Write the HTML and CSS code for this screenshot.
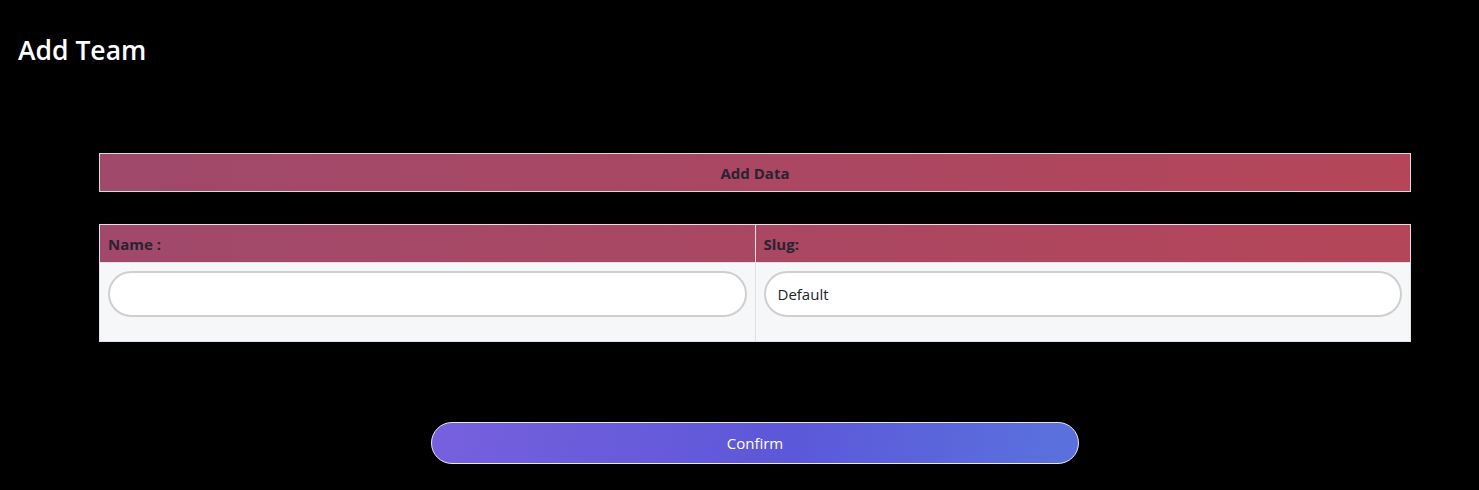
FILE: index.html
```html
<!DOCTYPE html>
<html>
<head>
<meta charset="utf-8">
<link rel="stylesheet" href="styles.css">
</head>
<body>
<div class="page">
  <h2 class="title">Add Team</h2>
  <div class="content">
    <div class="section-bar">Add Data</div>
    <table class="data-table">
      <thead>
        <tr>
          <th>Name :</th>
          <th>Slug:</th>
        </tr>
      </thead>
      <tbody>
        <tr>
          <td><input class="field" type="text" value=""></td>
          <td><input class="field" type="text" value="Default"></td>
        </tr>
      </tbody>
    </table>
    <div class="actions">
      <button class="confirm">Confirm</button>
    </div>
  </div>
</div>
</body>
</html>
```

FILE: styles.css
```css
html, body {
  margin: 0;
  padding: 0;
  background: #000;
}
body {
  font-family: "Open Sans", "Noto Sans", sans-serif;
  color: #fff;
}
.page {
  padding: 30px 18px 0 18px;
}
.title {
  margin: 0;
  font-size: 26.5px;
  font-weight: 600;
  line-height: 40px;
  color: #fff;
}
.content {
  padding: 83px 50px 0 81px;
}
.section-bar {
  height: 37px;
  border: 1px solid #d9d9d9;
  background: linear-gradient(100deg, #a0496b 0%, #ab4762 55%, #b54659 100%);
  color: #2a2230;
  font-weight: 700;
  font-size: 15px;
  display: flex;
  align-items: center;
  justify-content: center;
}
.data-table {
  margin-top: 32px;
  width: 100%;
  border-collapse: collapse;
  border: 1px solid #dee2e6;
}
.data-table thead tr {
  background: linear-gradient(100deg, #a0496b 0%, #ab4762 55%, #b54659 100%);
}
.data-table th {
  height: 38px;
  padding: 0 8px;
  text-align: left;
  font-size: 15px;
  font-weight: 700;
  color: #2a2230;
  border-left: 1px solid #dee2e6;
  box-sizing: border-box;
}
.data-table th:first-child { border-left: none; }
.data-table tbody td {
  background: #f6f7f9;
  padding: 8px 8px 24px 8px;
  border-left: 1px solid #dee2e6;
  border-top: 1px solid #dee2e6;
  vertical-align: top;
  width: 50%;
}
.data-table tbody td:first-child { border-left: none; }
.field {
  display: block;
  width: 100%;
  box-sizing: border-box;
  height: 46px;
  border: 2px solid #cfcfcf;
  border-radius: 23px;
  background: #fff;
  padding: 0 12px;
  font-family: "Open Sans", "Noto Sans", sans-serif;
  font-size: 15px;
  color: #212529;
  outline: none;
}
.actions {
  display: flex;
  justify-content: center;
  padding-top: 80px;
}
.confirm {
  width: 648px;
  height: 42px;
  border: 1px solid #e8e8f5;
  border-radius: 21px;
  background: linear-gradient(100deg, #7760dd 0%, #5c58d9 55%, #5a72dd 100%);
  color: #fff;
  font-family: "Open Sans", "Noto Sans", sans-serif;
  font-size: 15px;
  cursor: pointer;
}
```
